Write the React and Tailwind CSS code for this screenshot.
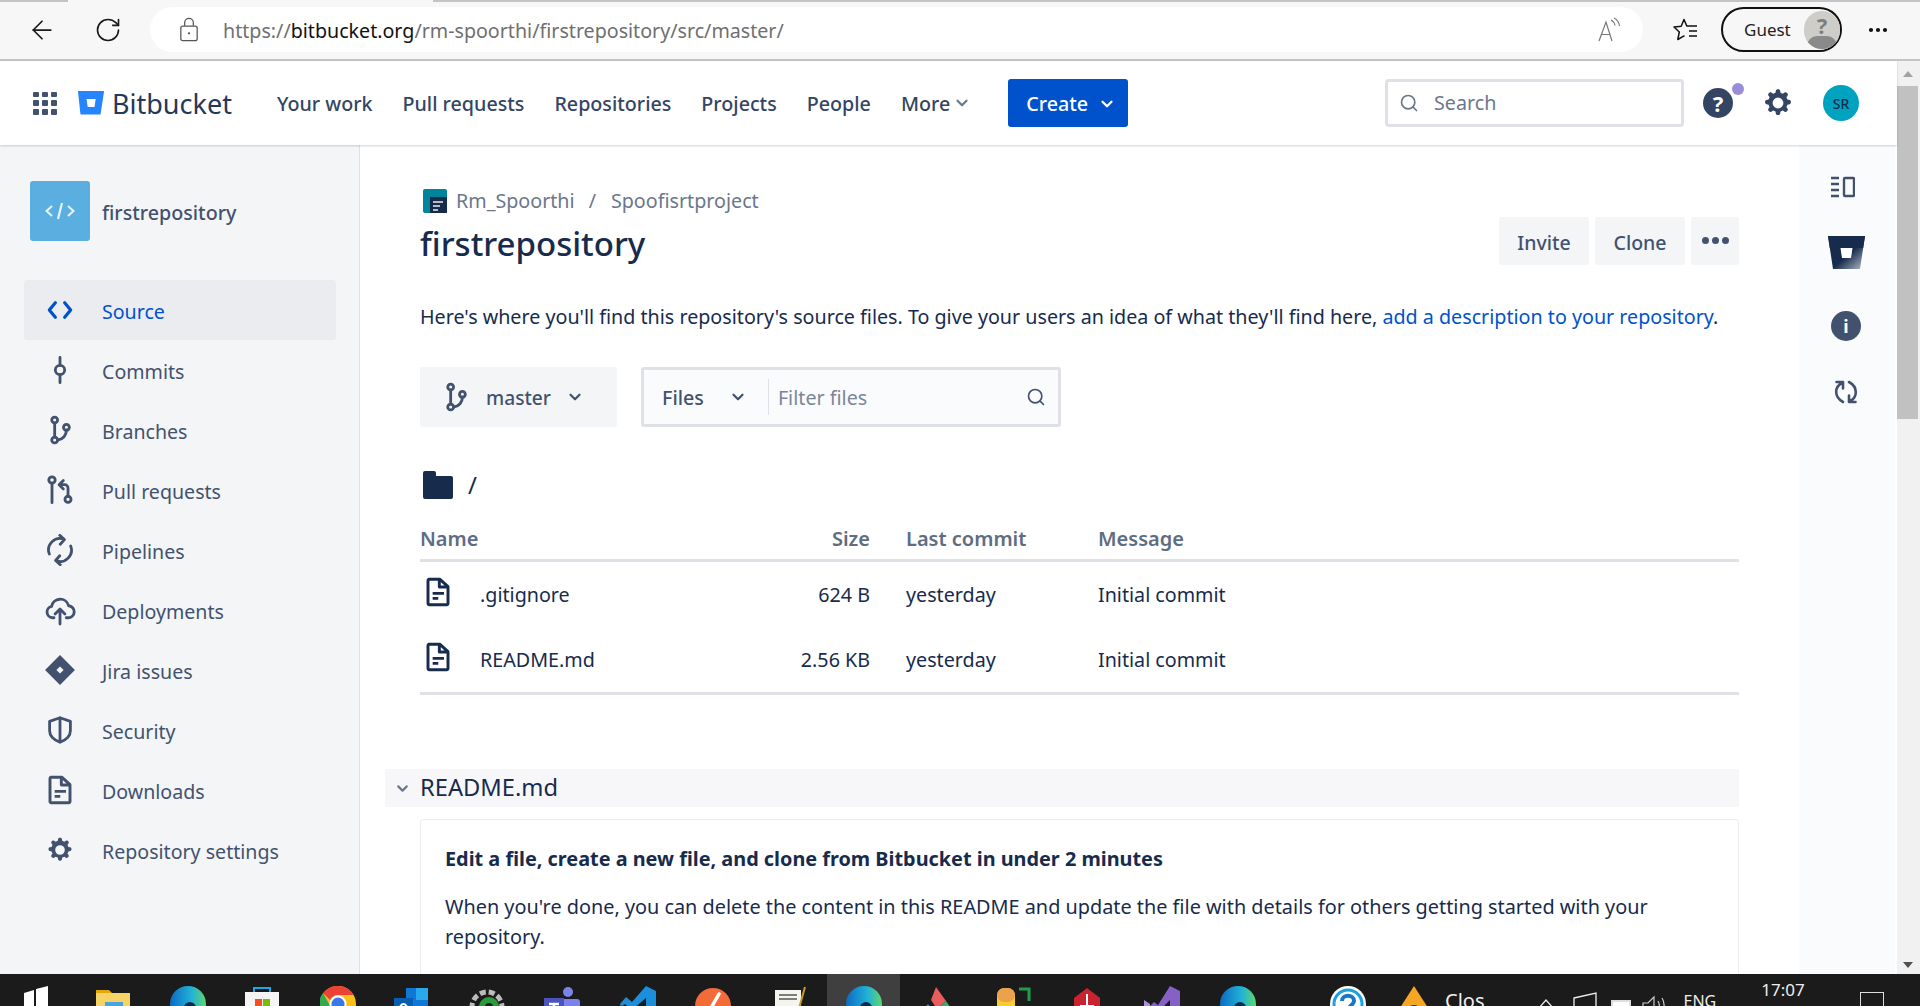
import { ArrowLeft, RotateCw, ChevronDown, Search, MoreHorizontal } from 'lucide-react';

const SIDE_ITEMS = [
  ['Source', 'source'],
  ['Commits', 'commit'],
  ['Branches', 'branch'],
  ['Pull requests', 'pull'],
  ['Pipelines', 'pipe'],
  ['Deployments', 'deploy'],
  ['Jira issues', 'jira'],
  ['Security', 'shield'],
  ['Downloads', 'doc'],
  ['Repository settings', 'gear'],
];

const GEAR =
  'M11.7 2.8h.6c.5 0 1 .4 1.1.9l.3 1.4c.5.2 1 .4 1.5.7l1.2-.8c.4-.3 1-.2 1.4.1l.5.5c.4.4.4 1 .1 1.4l-.8 1.2c.3.5.5 1 .7 1.5l1.4.3c.5.1.9.6.9 1.1v.6c0 .5-.4 1-.9 1.1l-1.4.3c-.2.5-.4 1-.7 1.5l.8 1.2c.3.4.2 1-.1 1.4l-.5.5c-.4.4-1 .4-1.4.1l-1.2-.8c-.5.3-1 .5-1.5.7l-.3 1.4c-.1.5-.6.9-1.1.9h-.6c-.5 0-1-.4-1.1-.9l-.3-1.4c-.5-.2-1-.4-1.5-.7l-1.2.8c-.4.3-1 .2-1.4-.1l-.5-.5c-.4-.4-.4-1-.1-1.4l.8-1.2c-.3-.5-.5-1-.7-1.5l-1.4-.3c-.5-.1-.9-.6-.9-1.1v-.6c0-.5.4-1 .9-1.1l1.4-.3c.2-.5.4-1 .7-1.5l-.8-1.2c-.3-.4-.2-1 .1-1.4l.5-.5c.4-.4 1-.4 1.4-.1l1.2.8c.5-.3 1-.5 1.5-.7l.3-1.4c.1-.5.6-.9 1.1-.9zM12 8.400a3.600 3.600 0 1 0 0 7.200 3.600 3.600 0 0 0 0-7.200z';

function Glyph({ name, className = 'h-[32px] w-[32px]', color = '#42526e' }) {
  const line = { fill: 'none', stroke: color, strokeWidth: 2.1, strokeLinecap: 'round', strokeLinejoin: 'round' };
  return (
    <svg viewBox="0 0 24 24" className={className}>
      {name === 'source' && <path {...line} strokeWidth={2.4} d="M8.500 6.500 4 12l4.500 5.500M15.500 6.500 20 12l-4.500 5.500" />}
      {name === 'commit' && (
        <>
          <circle cx="12" cy="12" r="3.500" {...line} />
          <path {...line} d="M12 2.500v6M12 15.500v6" />
        </>
      )}
      {name === 'branch' && (
        <>
          <circle cx="8" cy="4.500" r="2.200" {...line} />
          <circle cx="8" cy="19.500" r="2.200" {...line} />
          <circle cx="16.800" cy="10" r="2.200" {...line} />
          <path {...line} d="M8 6.700v10.600M16.800 12.200c0 3.600-2.500 6.900-6.600 7.300" />
        </>
      )}
      {name === 'pull' && (
        <>
          <circle cx="6" cy="4.500" r="2.400" {...line} />
          <path {...line} d="M6 6.900V21.500" />
          <circle cx="18" cy="19" r="2.300" {...line} />
          <path {...line} d="M18 16.700V10.500a2.500 2.500 0 0 0-2.500-2.500H11.500M14.500 4.800 11.300 8l3.200 3.200" />
        </>
      )}
      {name === 'pipe' && (
        <path
          {...line}
          d="M4 15a8.500 8.500 0 0 1 11-11M11.800 1 15.300 4.200 12.200 7.700M20 9a8.500 8.500 0 0 1-11 11M12.200 23 8.700 19.800 11.800 16.300"
        />
      )}
      {name === 'deploy' && (
        <path
          {...line}
          d="M7.500 17.800H6.300a4.300 4.300 0 0 1-.6-8.500 6.500 6.500 0 0 1 12.700-.5 4.500 4.500 0 0 1-.5 9h-1.200M12 22.500v-11M8.300 15 12 11.300l3.700 3.700"
        />
      )}
      {name === 'jira' && (
        <path fill={color} fillRule="evenodd" d="M12 .800 23.200 12 12 23.200.800 12zM12 9.300 9.300 12l2.700 2.700 2.700-2.700z" />
      )}
      {name === 'shield' && (
        <path {...line} d="M12 2.800 19.800 5.500v7c0 3.800-3.200 6.800-7.800 8.700-4.600-1.900-7.800-4.900-7.800-8.700v-7zM12 2.800v18" />
      )}
      {name === 'doc' && (
        <>
          <path {...line} strokeWidth={2.200} d="M5 2.500h8.500L19.500 8v12.500a1 1 0 0 1-1 1H5.500a1 1 0 0 1-1-1v-17a1 1 0 0 1 .500-1zM13 2.500V8.300h6.500" />
          <path {...line} strokeLinecap="butt" d="M8 13h8.500M8 16.800h4.200" />
        </>
      )}
      {name === 'gear' && <path fill={color} fillRule="evenodd" d={GEAR} />}
    </svg>
  );
}

function BrowserBar() {
  return (
    <div className="relative flex h-[61px] shrink-0 items-center border-b-[2px] border-[#c4c4c4] bg-[#f7f7f7]">
      <div className="absolute left-0 top-0 h-[2px] w-[68px] bg-[#c4c4c4]" />
      <div className="absolute left-[433px] right-0 top-0 h-[2px] bg-[#c4c4c4]" />
      <ArrowLeft className="ml-[27px] h-[30px] w-[30px] text-[#1a1a1a]" strokeWidth={1.4} />
      <RotateCw className="ml-[37px] h-[28px] w-[28px] text-[#1a1a1a]" strokeWidth={1.4} />
      <div className="ml-[28px] flex h-[45px] w-[1493px] items-center rounded-full bg-white pl-[29px]">
        <svg viewBox="0 0 20 26" className="h-[25px] w-[20px]">
          <rect x="1.500" y="9.500" width="17" height="15" rx="2" fill="none" stroke="#555" strokeWidth="1.300" />
          <path d="M5.500 9V6a4.500 4.500 0 0 1 9 0v3" fill="none" stroke="#555" strokeWidth="1.300" />
          <circle cx="10" cy="17" r="1.200" fill="#555" />
        </svg>
        <span className="ml-[24px] pt-[2px] text-[19.65px] text-[#6f6f6f]">
          https://<span className="text-[#111]">bitbucket.org</span>/rm-spoorthi/firstrepository/src/master/
        </span>
        <svg viewBox="0 0 26 26" className="ml-auto mr-[21px] h-[26px] w-[26px]" fill="none" stroke="#777" strokeWidth="1.200">
          <path d="M3 24 10 5l6 19M5.500 17.500H14" />
          <path d="M15 3c2 1 3.500 3 4 5.500M18 1c3 1.500 5 4 5.500 8" />
        </svg>
      </div>
      <svg viewBox="0 0 26 26" className="ml-[30px] h-[26px] w-[26px]" fill="none" stroke="#111" strokeWidth="1.500" strokeLinejoin="round">
        <path d="M24 9H13.800L11 2.500 8.200 9.200 1 10l5.300 5-1.500 7.500 6.700-3.800M16 14h8M16 19h8" />
      </svg>
      <div className="ml-[22px] flex h-[45px] w-[121px] items-center rounded-full border-[2px] border-[#111] bg-[#f7f7f7] pl-[21px]">
        <span className="text-[17px] text-[#222]">Guest</span>
        <div className="relative ml-[13px] flex h-[38px] w-[38px] items-center justify-center overflow-hidden rounded-full bg-[#cfcdc8]">
          <span className="mb-[9px] text-[22px] font-bold leading-none text-[#7f7f7f]">?</span>
          <div className="absolute -bottom-[7px] h-[20px] w-[30px] rounded-full bg-[#8a8a8a]" />
        </div>
      </div>
      <MoreHorizontal className="ml-[24px] h-[24px] w-[24px] text-[#111]" strokeWidth={2.200} />
    </div>
  );
}

function TopNav() {
  const links = [
    ['Your work', 'ml-[45px]'],
    ['Pull requests', 'ml-[30px]'],
    ['Repositories', 'ml-[30px]'],
    ['Projects', 'ml-[30px]'],
    ['People', 'ml-[30px]'],
    ['More', 'ml-[30px]'],
  ];
  return (
    <div className="relative z-10 flex h-[84px] shrink-0 items-center bg-white pl-[33px] shadow-[0_1px_2px_rgba(9,30,66,0.2)]">
      <div className="grid h-[23px] w-[24px] grid-cols-3 gap-[3px]">
        {Array.from({ length: 9 }).map((_, i) => (
          <span key={i} className="rounded-[1px] bg-[#42526e]" />
        ))}
      </div>
      <svg viewBox="0 0 26 26" className="ml-[21px] h-[26px] w-[26px]">
        <path fill="#2684ff" d="M.6 1h24.800a.6.6 0 0 1 .6.7l-3.400 22.200a.8.8 0 0 1-.8.7H3.400a1 1 0 0 1-1-.9L0 1.700A.6.6 0 0 1 .6 1z" />
        <path fill="#fff" d="M8.500 9h9.200l-1.200 8H9.700z" />
      </svg>
      <span className="ml-[8px] text-[27px] leading-none text-[#253858]">Bitbucket</span>
      {links.map(([t, m]) => (
        <span key={t} className={`${m} pt-[2px] text-[19.7px] font-medium text-[#344563]`}>
          {t}
        </span>
      ))}
      <ChevronDown className="ml-[3px] h-[18px] w-[18px] text-[#6b778c]" strokeWidth={3} />
      <div className="ml-[37px] flex h-[48px] w-[120px] items-center rounded-[3px] bg-[#0052cc] pl-[18px] pt-[2px] text-[19.7px] font-medium text-white">
        Create
        <ChevronDown className="ml-[10px] h-[18px] w-[18px]" strokeWidth={3} />
      </div>
      <div className="ml-auto flex h-[48px] w-[299px] items-center rounded-[4px] border-[3px] border-[#dfe1e6] bg-white pl-[11px] text-[19.7px] text-[#6b778c]">
        <Search className="h-[20px] w-[20px]" strokeWidth={2} />
        <span className="ml-[15px]">Search</span>
      </div>
      <div className="relative ml-[19px] flex h-[30px] w-[30px] items-center justify-center rounded-full bg-[#344563] text-[22px] font-bold leading-none text-white">
        ?
        <span className="absolute -right-[11px] -top-[5px] h-[12px] w-[12px] rounded-full bg-[#998dd9]" />
      </div>
      <Glyph name="gear" className="ml-[27px] h-[36px] w-[36px]" color="#344563" />
      <div className="ml-[27px] mr-[38px] flex h-[36px] w-[36px] items-center justify-center rounded-full bg-[#00a3bf] text-[14px] font-medium text-[#172b4d]">
        SR
      </div>
    </div>
  );
}

function Sidebar() {
  return (
    <div className="w-[360px] shrink-0 border-r border-[#dfe1e6] bg-[#f4f5f7] pt-[36px]">
      <div className="flex h-[60px] items-center pl-[30px]">
        <div className="flex h-[60px] w-[60px] items-center justify-center rounded-[3px] bg-[#5aafe0]">
          <svg viewBox="0 0 30 24" className="h-[24px] w-[30px]" fill="none" stroke="#e6f3fb" strokeWidth="2.200">
            <path d="M7 7 1.500 12 7 17M23 7l5.500 5-5.500 5M17 4l-4 16" />
          </svg>
        </div>
        <span className="ml-[12px] pt-[4px] text-[19.7px] font-medium text-[#42526e]">firstrepository</span>
      </div>
      <div className="ml-[24px] mt-[39px] w-[312px]">
        {SIDE_ITEMS.map(([label, icon], i) => (
          <div
            key={label}
            className={`flex h-[60px] items-center rounded-[3px] pl-[20px] ${i === 0 ? 'bg-[#ebecf0]' : ''}`}
          >
            <Glyph name={icon} color={i === 0 ? '#0052cc' : '#42526e'} />
            <span className={`ml-[26px] pt-[4px] text-[19.6px] ${i === 0 ? 'text-[#0052cc]' : 'text-[#42526e]'}`}>{label}</span>
          </div>
        ))}
      </div>
    </div>
  );
}

function FileRow({ name, size, className }) {
  return (
    <div className={`flex items-center text-[19.7px] text-[#172b4d] ${className}`}>
      <Glyph name="doc" className="mb-[6px] ml-[2px] h-[32px] w-[32px]" color="#172b4d" />
      <span className="ml-[26px] flex-1">{name}</span>
      <span className="whitespace-nowrap text-right">{size}</span>
      <span className="ml-[36px] w-[192px]">yesterday</span>
      <span className="w-[641px]">Initial commit</span>
    </div>
  );
}

function Main() {
  return (
    <div className="min-w-0 flex-1 overflow-hidden bg-white">
      <div className="pl-[60px] pr-[60px] pt-[43px]">
        <div className="flex h-[26px] items-center text-[19.7px] text-[#6b778c]">
          <svg viewBox="0 0 24 24" className="ml-[3px] h-[24px] w-[24px]">
            <rect width="24" height="24" rx="2" fill="#00849b" />
            <rect x="7" y="8" width="17" height="16" fill="#172b4d" />
            <path d="M10 13h10M10 17h7M10 21h5" stroke="#eee" strokeWidth="1.600" />
          </svg>
          <span className="ml-[9px]">Rm_Spoorthi</span>
          <span className="ml-[14px]">/</span>
          <span className="ml-[15px]">Spoofisrtproject</span>
        </div>
        <div className="mt-[3px] flex h-[48px] items-start">
          <h1 className="mt-[3px] text-[33px] font-medium leading-[48px] text-[#172b4d]">firstrepository</h1>
          <div className="ml-auto flex gap-[6px] text-[19.5px] font-medium text-[#42526e]">
            <div className="flex h-[48px] w-[90px] items-center justify-center rounded-[3px] bg-[#f4f5f7] pt-[3px]">Invite</div>
            <div className="flex h-[48px] w-[90px] items-center justify-center rounded-[3px] bg-[#f4f5f7] pt-[3px]">Clone</div>
            <div className="flex h-[48px] w-[48px] items-center justify-center gap-[3px] rounded-[3px] bg-[#f4f5f7] pb-[1px]">
              <span className="h-[7px] w-[7px] rounded-full bg-[#42526e]" />
              <span className="h-[7px] w-[7px] rounded-full bg-[#42526e]" />
              <span className="h-[7px] w-[7px] rounded-full bg-[#42526e]" />
            </div>
          </div>
        </div>
        <p className="mt-[37px] whitespace-nowrap text-[19.72px] leading-[30px] text-[#172b4d]">
          Here's where you'll find this repository's source files. To give your users an idea of what they'll find here,{' '}
          <span className="text-[#0052cc]">add a description to your repository</span>.
        </p>
        <div className="mt-[35px] flex h-[60px] gap-[24px]">
          <div className="flex w-[197px] items-center rounded-[3px] bg-[#f4f5f7] pl-[20px] text-[19.2px] font-medium text-[#42526e]">
            <Glyph name="branch" />
            <span className="ml-[14px] pt-[3px]">master</span>
            <ChevronDown className="ml-[15px] h-[18px] w-[18px]" strokeWidth={3} />
          </div>
          <div className="flex w-[420px] items-center rounded-[3px] border-[3px] border-[#dfe1e6] bg-[#fafbfc] pl-[18px] text-[19.7px]">
            <span className="pt-[2px] font-medium text-[#42526e]">Files</span>
            <ChevronDown className="ml-[25px] h-[18px] w-[18px] text-[#42526e]" strokeWidth={3} />
            <div className="ml-[21px] h-[36px] w-px bg-[#dfe1e6]" />
            <span className="ml-[9px] pt-[2px] text-[#7a869a]">Filter files</span>
            <Search className="ml-auto mr-[12px] h-[20px] w-[20px] text-[#42526e]" strokeWidth={2} />
          </div>
        </div>
        <div className="mt-[44px] flex h-[28px] items-center">
          <svg viewBox="0 0 30 28" className="ml-[3px] h-[28px] w-[30px]">
            <path fill="#172b4d" d="M2 0h9a2 2 0 0 1 2 2v3h15a2 2 0 0 1 2 2v19a2 2 0 0 1-2 2H2a2 2 0 0 1-2-2V2a2 2 0 0 1 2-2z" />
          </svg>
          <span className="ml-[15px] text-[24px] text-[#172b4d]">/</span>
        </div>
        <div className="mt-[25px] flex h-[38px] items-start border-b-[3px] border-[#dfe1e6] text-[20px] font-semibold leading-[30px] text-[#5e6c84]">
          <span className="flex-1">Name</span>
          <span className="text-right">Size</span>
          <span className="ml-[36px] w-[192px]">Last commit</span>
          <span className="w-[641px]">Message</span>
        </div>
        <FileRow name=".gitignore" size="624 B" className="mt-[1px] h-[64.5px]" />
        <FileRow name="README.md" size="2.56 KB" className="h-[64.5px]" />
        <div className="h-[3px] bg-[#dfe1e6]" />
      </div>
      <div className="ml-[25px] mr-[60px] mt-[74px] flex h-[38px] items-center bg-[#f7f7f9] pl-[9px]">
        <ChevronDown className="h-[17px] w-[17px] text-[#6b778c]" strokeWidth={3} />
        <span className="ml-[9px] text-[23.7px] text-[#172b4d]">README.md</span>
      </div>
      <div className="mx-[60px] mt-[12px] min-h-[220px] rounded-[3px] border border-[#ebecf0] px-[24px] pt-[24px]">
        <h3 className="text-[19.85px] font-bold leading-[30px] text-[#172b4d]">
          Edit a file, create a new file, and clone from Bitbucket in under 2 minutes
        </h3>
        <p className="mt-[18px] text-[19.85px] leading-[30px] text-[#172b4d]">
          When you're done, you can delete the content in this README and update the file with details for others getting started with your repository.
        </p>
      </div>
    </div>
  );
}

function RightPanel() {
  return (
    <div className="relative mr-[2px] w-[96px] shrink-0 bg-[#fafbfc]">
      <div className="flex flex-col items-start pl-[32px] pt-[31px]">
        <svg viewBox="0 0 24 22" className="h-[22px] w-[24px]" fill="none" stroke="#42526e" strokeWidth="2.400">
          <path d="M0 2h8M0 8h8M0 14h8M0 20h8" />
          <rect x="13" y="2" width="10" height="18" rx="1" />
        </svg>
        <svg viewBox="0 0 37 34" className="ml-[-3px] mt-[38px] h-[34px] w-[37px]">
          <defs>
            <linearGradient id="bucket-fade" x1="0.55" y1="0.55" x2="1" y2="1">
              <stop offset="0" stopColor="#172b4d" />
              <stop offset="1" stopColor="#b8c0cc" />
            </linearGradient>
          </defs>
          <path fill="url(#bucket-fade)" fillRule="evenodd" d="M0 0h37l-5 33H5zM13 12l1.500 10h8l1.500-10z" />
          <path fill="#172b4d" d="M0 0h37l-1.800 12H1.800z" />
          <path fill="#fff" d="M12.500 12h12l-1.500 10h-9z" />
        </svg>
        <div className="mt-[41px] flex h-[30px] w-[30px] items-center justify-center rounded-full bg-[#42526e] text-[18px] font-bold leading-none text-white">
          i
        </div>
        <svg viewBox="0 0 26 26" className="ml-[2px] mt-[38px] h-[26px] w-[26px]" fill="none" stroke="#42526e" strokeWidth="2.600" strokeLinecap="round" strokeLinejoin="round">
          <path d="M3.500 3h6.500v6.500M9.500 3.500C1 8 1 18 10 23M22.500 23H16v-6.500M16.500 22.500C25 18 25 8 16 3" />
        </svg>
      </div>
    </div>
  );
}

function Scrollbar() {
  return (
    <div className="flex w-[23px] shrink-0 flex-col items-start bg-[#f1f1f1]">
      <div className="flex h-[25px] w-[21px] items-center justify-center">
        <span className="h-0 w-0 border-x-[5px] border-b-[6px] border-x-transparent border-b-[#a3a3a3]" />
      </div>
      <div className="h-[333px] w-[21px] bg-[#c1c1c1]" />
      <div className="flex-1" />
      <div className="flex h-[18px] w-[21px] items-center justify-center">
        <span className="h-0 w-0 border-x-[5px] border-t-[6px] border-x-transparent border-t-[#505050]" />
      </div>
    </div>
  );
}

function Edge() {
  return (
    <svg viewBox="0 0 36 36" className="h-[36px] w-[36px]">
      <defs>
        <linearGradient id="edge-fill" x1="0" y1="0" x2="1" y2="0">
          <stop offset="0" stopColor="#0c6bc4" />
          <stop offset="0.6" stopColor="#22b2d8" />
          <stop offset="1" stopColor="#5fd66b" />
        </linearGradient>
      </defs>
      <circle cx="18" cy="18" r="18" fill="url(#edge-fill)" />
      <circle cx="20" cy="22" r="6" fill="#0b2a4a" />
    </svg>
  );
}

function TaskIcon({ kind }) {
  if (kind === 'edge') return <Edge />;
  if (kind === 'win')
    return (
      <svg viewBox="0 0 36 36" className="h-[36px] w-[24px]" preserveAspectRatio="none">
        <path fill="#fff" d="M0 7 15 4v32H0zM18 3 36 0v36H18z" />
      </svg>
    );
  if (kind === 'folder')
    return (
      <svg viewBox="0 0 36 36" className="h-[36px] w-[36px]">
        <path fill="#e3a70c" d="M1 4h13l3 3H1z" />
        <path fill="#f6d365" d="M1 7h34v29H1z" />
        <rect x="10" y="16" width="18" height="12" fill="#4aa3e0" />
      </svg>
    );
  if (kind === 'store')
    return (
      <svg viewBox="0 0 36 36" className="h-[36px] w-[36px]">
        <path fill="none" stroke="#19a9e6" strokeWidth="2" d="M10 8V2h16v6" />
        <rect x="1" y="6" width="34" height="30" fill="#f4f4f4" />
        <rect x="11" y="13" width="7" height="7" fill="#f25022" />
        <rect x="19" y="13" width="7" height="7" fill="#7fba00" />
      </svg>
    );
  if (kind === 'chrome')
    return (
      <svg viewBox="0 0 36 36" className="h-[36px] w-[36px]">
        <circle cx="18" cy="18" r="18" fill="#fbc116" />
        <path fill="#ea4335" d="M18 0a18 18 0 0 1 15.600 9H18a9 9 0 0 0-8 5L3 7A18 18 0 0 1 18 0z" />
        <path fill="#34a853" d="M3 7l9 16 5 13A18 18 0 0 1 3 7z" />
        <circle cx="18" cy="18" r="8.500" fill="#fff" />
        <circle cx="18" cy="18" r="6.500" fill="#3b78e7" />
      </svg>
    );
  if (kind === 'outlook')
    return (
      <svg viewBox="0 0 36 36" className="h-[36px] w-[36px]">
        <rect x="12" y="2" width="22" height="34" fill="#0f78d4" />
        <rect x="22" y="2" width="12" height="12" fill="#29a8ea" />
        <rect x="0" y="12" width="19" height="24" fill="#0a5eb0" />
        <ellipse cx="9.500" cy="24" rx="4" ry="6" fill="none" stroke="#fff" strokeWidth="2" />
      </svg>
    );
  if (kind === 'cog')
    return (
      <svg viewBox="0 0 36 36" className="h-[36px] w-[36px]">
        <circle cx="18" cy="21" r="15" fill="none" stroke="#bbb" strokeWidth="5" strokeDasharray="6 3" />
        <circle cx="20" cy="21" r="10" fill="#2d9a3a" />
        <circle cx="20" cy="21" r="4" fill="#123" />
      </svg>
    );
  if (kind === 'teams')
    return (
      <svg viewBox="0 0 36 36" className="h-[36px] w-[36px]">
        <circle cx="24" cy="6" r="5" fill="#7b83eb" />
        <rect x="16" y="13" width="20" height="23" rx="3" fill="#7b83eb" />
        <rect x="0" y="12" width="20" height="24" fill="#4b53bc" />
        <path stroke="#fff" strokeWidth="2.400" d="M5 18h10M10 18v12" />
      </svg>
    );
  if (kind === 'vscode')
    return (
      <svg viewBox="0 0 36 36" className="h-[36px] w-[36px]">
        <path fill="#1b8fdc" d="M26 0l10 5v31H26V12L12 24l-7-6-3 2-2-2 6-7 6 5z" />
        <path fill="#0d6fb8" d="M0 18l5 4-5 5zM5 22l7 6-5 8-7-6z" />
      </svg>
    );
  if (kind === 'orange')
    return (
      <svg viewBox="0 0 36 36" className="h-[36px] w-[36px]">
        <circle cx="18" cy="20" r="18" fill="#f26b38" />
        <path stroke="#fff" strokeWidth="3.500" strokeLinecap="round" d="M24 8l-8 14" />
      </svg>
    );
  if (kind === 'note')
    return (
      <svg viewBox="0 0 36 36" className="h-[36px] w-[36px]">
        <rect x="4" y="4" width="26" height="32" fill="#f5f5f0" />
        <path stroke="#555" strokeWidth="1.500" d="M8 9h18M8 13h18" />
        <circle cx="17" cy="28" r="7" fill="#6b9c46" />
        <path stroke="#c59a27" strokeWidth="2" d="M34 1 27 26" />
      </svg>
    );
  if (kind === 'gem')
    return (
      <svg viewBox="0 0 36 36" className="h-[36px] w-[36px]">
        <path fill="#e85d5d" d="M16 1l10 14-9 8-6-9z" />
        <path fill="#43a867" d="M26 15l10 14-10 7-9-13z" />
        <path fill="#3e95d9" d="M8 18l9 12-4 6H2l-2-8z" />
      </svg>
    );
  if (kind === 'yellow')
    return (
      <svg viewBox="0 0 36 36" className="h-[36px] w-[36px]">
        <rect x="0" y="2" width="18" height="34" rx="8" fill="#f6cf2e" />
        <rect x="0" y="2" width="18" height="14" rx="7" fill="#eba24c" />
        <path fill="none" stroke="#1f9d4d" strokeWidth="3" d="M22 3h10v12" />
        <path fill="#0f67b5" d="M12 36l5-12 5 12z" />
      </svg>
    );
  if (kind === 'shield')
    return (
      <svg viewBox="0 0 36 36" className="h-[36px] w-[36px]">
        <path fill="#c9232f" d="M4 12 17 2l13 10v24H4z" />
        <path stroke="#fff" strokeWidth="2" d="M17 8v16M10 20h14" />
        <circle cx="30" cy="34" r="6" fill="none" stroke="#888" strokeWidth="1.500" />
      </svg>
    );
  if (kind === 'vs')
    return (
      <svg viewBox="0 0 36 36" className="h-[36px] w-[36px]">
        <path fill="#8661c5" d="M26 0l10 5v31H26V14L14 26l-8-6 4-4 4 3z" />
        <path fill="#b18fe0" d="M0 14l6 4v18H0z" />
      </svg>
    );
  if (kind === 'help')
    return (
      <svg viewBox="0 0 36 36" className="h-[36px] w-[36px]">
        <circle cx="18" cy="18" r="18" fill="#fff" />
        <circle cx="18" cy="18" r="14" fill="none" stroke="#1aa3e0" strokeWidth="3" />
        <path fill="none" stroke="#1a78c2" strokeWidth="4" d="M12 15c0-7 12-7 12 0 0 4-6 5-6 9" />
      </svg>
    );
  if (kind === 'kite')
    return (
      <svg viewBox="0 0 36 36" className="h-[36px] w-[36px]">
        <path fill="#f5a623" d="M18 0l18 28-5 8H5l-5-8z" />
        <circle cx="18" cy="26" r="7" fill="#33291c" />
        <path stroke="#f5a623" strokeWidth="2" d="M14 25h8" />
      </svg>
    );
  return null;
}

function Taskbar() {
  const icons = [
    ['win', 'w-[72px]'],
    ['folder', 'w-[82px]'],
    ['edge', 'w-[68px]'],
    ['store', 'w-[80px]'],
    ['chrome', 'w-[72px]'],
    ['outlook', 'w-[76px]'],
    ['cog', 'w-[74px]'],
    ['teams', 'w-[76px]'],
    ['vscode', 'w-[76px]'],
    ['orange', 'w-[74px]'],
    ['note', 'w-[77px]'],
    ['edge', 'w-[73px] bg-[#3f3f3f]'],
    ['gem', 'w-[76px]'],
    ['yellow', 'w-[78px]'],
    ['shield', 'w-[68px]'],
    ['vs', 'w-[80px]'],
    ['edge', 'w-[72px]'],
  ];
  return (
    <div className="flex h-[32px] shrink-0 items-stretch overflow-hidden bg-[#1b1b1b] text-white">
      {icons.map(([kind, w], i) => (
        <div key={i} className={`flex shrink-0 justify-center pt-[12px] ${w}`}>
          <TaskIcon kind={kind} />
        </div>
      ))}
      <div className="ml-[56px] shrink-0 pt-[12px]">
        <TaskIcon kind="help" />
      </div>
      <div className="ml-[30px] shrink-0 pt-[12px]">
        <TaskIcon kind="kite" />
      </div>
      <span className="ml-[13px] pt-[15px] text-[20px] leading-[24px] text-[#eee]">Clos</span>
      <svg viewBox="0 0 16 20" className="ml-[54px] mt-[24px] h-[20px] w-[16px]" fill="none" stroke="#eee" strokeWidth="1.300">
        <path d="M1 10 8 2l7 8" />
      </svg>
      <svg viewBox="0 0 24 30" className="ml-[19px] mt-[18px] h-[30px] w-[24px]" fill="none" stroke="#eee" strokeWidth="1.300">
        <path d="M1 6 23 1v29H1z" />
      </svg>
      <div className="ml-[14px] mt-[26px] h-[20px] w-[20px] border-[2px] border-[#ddd] bg-white" />
      <svg viewBox="0 0 24 24" className="ml-[11px] mt-[20px] h-[24px] w-[24px]" fill="none" stroke="#ccc" strokeWidth="1.200">
        <path d="M1 9h5l6-6v20l-6-6H1zM16 7c2 3 2 9 0 12M20 4c3 4 3 14 0 18" />
      </svg>
      <span className="ml-[17px] pt-[17px] text-[16px] leading-[20px] text-[#eee]">ENG</span>
      <span className="ml-[45px] pt-[6px] text-[17px] leading-[20px] text-[#eee]">17:07</span>
      <div className="ml-[55px] mt-[18px] h-[24px] w-[24px] border border-[#ddd]" />
    </div>
  );
}

export default function App() {
  return (
    <div className="flex h-[1006px] w-[1920px] flex-col overflow-hidden bg-white font-['Noto_Sans',sans-serif]">
      <BrowserBar />
      <div className="flex min-h-0 flex-1">
        <div className="flex min-w-0 flex-1 flex-col">
          <TopNav />
          <div className="flex min-h-0 flex-1">
            <Sidebar />
            <Main />
            <RightPanel />
          </div>
        </div>
        <Scrollbar />
      </div>
      <Taskbar />
    </div>
  );
}
